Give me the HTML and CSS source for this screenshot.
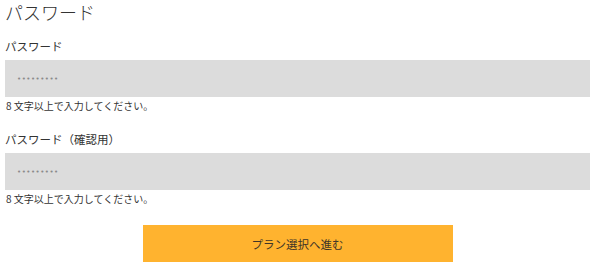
FILE: index.html
```html
<!DOCTYPE html>
<html lang="ja">
<head>
<meta charset="utf-8">
<link rel="stylesheet" href="styles.css">
</head>
<body>
<div class="page">
  <h1 class="title">パスワード</h1>
  <div class="field">
    <label class="label">パスワード</label>
    <div class="control"><span class="dots">•••••••••</span></div>
    <p class="help">8 文字以上で入力してください。</p>
  </div>
  <div class="field field-second">
    <label class="label">パスワード（確認用）</label>
    <div class="control"><span class="dots">•••••••••</span></div>
    <p class="help">8 文字以上で入力してください。</p>
  </div>
  <div class="actions">
    <button class="submit" type="button">プラン選択へ進む</button>
  </div>
</div>
</body>
</html>
```
FILE: styles.css
```css
html, body {
  margin: 0;
  padding: 0;
  background: #fff;
}
.page {
  width: 585px;
  padding-left: 5px;
  font-family: "Noto Sans CJK JP", "Noto Sans", sans-serif;
  color: #333;
}
.title {
  margin: 0;
  font-size: 18px;
  font-weight: 300;
  line-height: 25px;
}
.field {
  display: flex;
  flex-direction: column;
  margin-top: 12px;
}
.field-second {
  margin-top: 16px;
}
.label {
  font-size: 11.5px;
  font-weight: 400;
  line-height: 18px;
  margin-bottom: 5px;
}
.control {
  height: 37px;
  background: #dcdcdc;
  display: flex;
  align-items: center;
  padding-left: 12px;
}
.dots {
  color: #8a8a8a;
  font-size: 7px;
  letter-spacing: 0.5px;
  font-family: "DejaVu Sans", sans-serif;
}
.help {
  margin: 0;
  padding: 1px 0 0 1px;
  font-size: 10px;
  font-weight: 400;
  line-height: 16px;
}
.actions {
  display: flex;
  justify-content: center;
  margin-top: 18px;
}
.submit {
  width: 310px;
  height: 37px;
  border: none;
  background: #ffb32f;
  color: #3e3528;
  font-family: "Noto Sans CJK JP", "Noto Sans", sans-serif;
  font-size: 11.5px;
  font-weight: 400;
  padding: 0;
}
```
